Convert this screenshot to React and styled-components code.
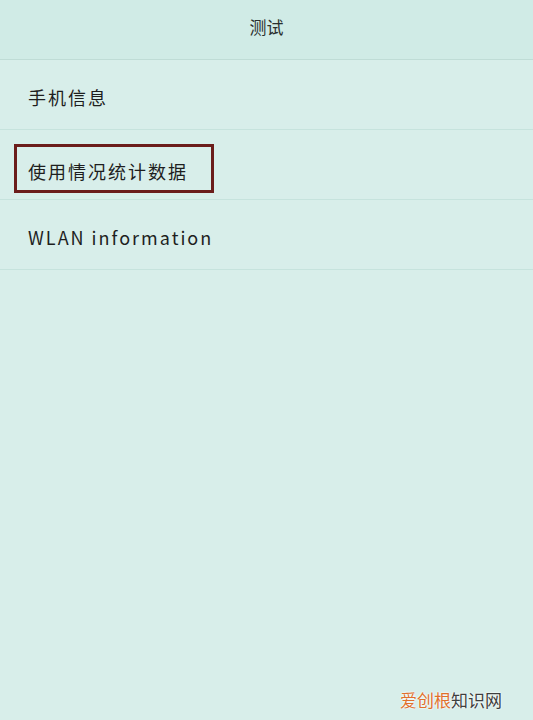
import React from "react";
import styled, { createGlobalStyle } from "styled-components";

const GlobalStyle = createGlobalStyle`
  html, body {
    margin: 0;
    padding: 0;
    background: #d8eeea;
  }
  body {
    font-family: "Noto Sans CJK SC", "Noto Sans", sans-serif;
  }
`;

const items = [
  { label: "手机信息" },
  { label: "使用情况统计数据", boxed: true },
  { label: "WLAN information" },
];

export default function App() {
  return (
    <Page>
      <GlobalStyle />
      <Header>测试</Header>
      <List>
        {items.map((item) => (
          <Row key={item.label}>
            <Label $boxed={item.boxed}>{item.label}</Label>
          </Row>
        ))}
      </List>
      <Watermark>
        <span>爱创根</span>
        <Gray>知识网</Gray>
      </Watermark>
    </Page>
  );
}

const Page = styled.div`
  position: relative;
  width: 533px;
  height: 720px;
  overflow: hidden;
  background: #d8eeea;
`;

const Header = styled.div`
  height: 60px;
  display: flex;
  align-items: center;
  justify-content: center;
  background: #d0ebe6;
  border-bottom: 1px solid #bfdcd6;
  color: #2a2f2e;
  font-size: 17px;
  padding-bottom: 6px;
  box-sizing: border-box;
`;

const List = styled.div`
  display: flex;
  flex-direction: column;
`;

const Row = styled.div`
  height: 70px;
  display: flex;
  align-items: center;
  padding-left: 14px;
  border-bottom: 1px solid #c6e3dd;
  box-sizing: border-box;
`;

const Label = styled.div`
  box-sizing: border-box;
  display: flex;
  align-items: center;
  height: 49px;
  width: ${(p) => (p.$boxed ? "200px" : "auto")};
  margin-top: ${(p) => (p.$boxed ? "8px" : "0")};
  padding-left: 11px;
  padding-top: 4px;
  border: 3px solid ${(p) => (p.$boxed ? "#6b1d1b" : "transparent")};
  font-size: 18px;
  color: #1e1e1e;
  letter-spacing: 2px;
`;

const Watermark = styled.div`
  position: absolute;
  right: 31px;
  bottom: 8px;
  font-size: 17px;
  color: #e0702c;
  text-shadow: 0 0 2px #fff, 0 0 2px #fff;
`;

const Gray = styled.span`
  color: #3e3e3e;
`;
